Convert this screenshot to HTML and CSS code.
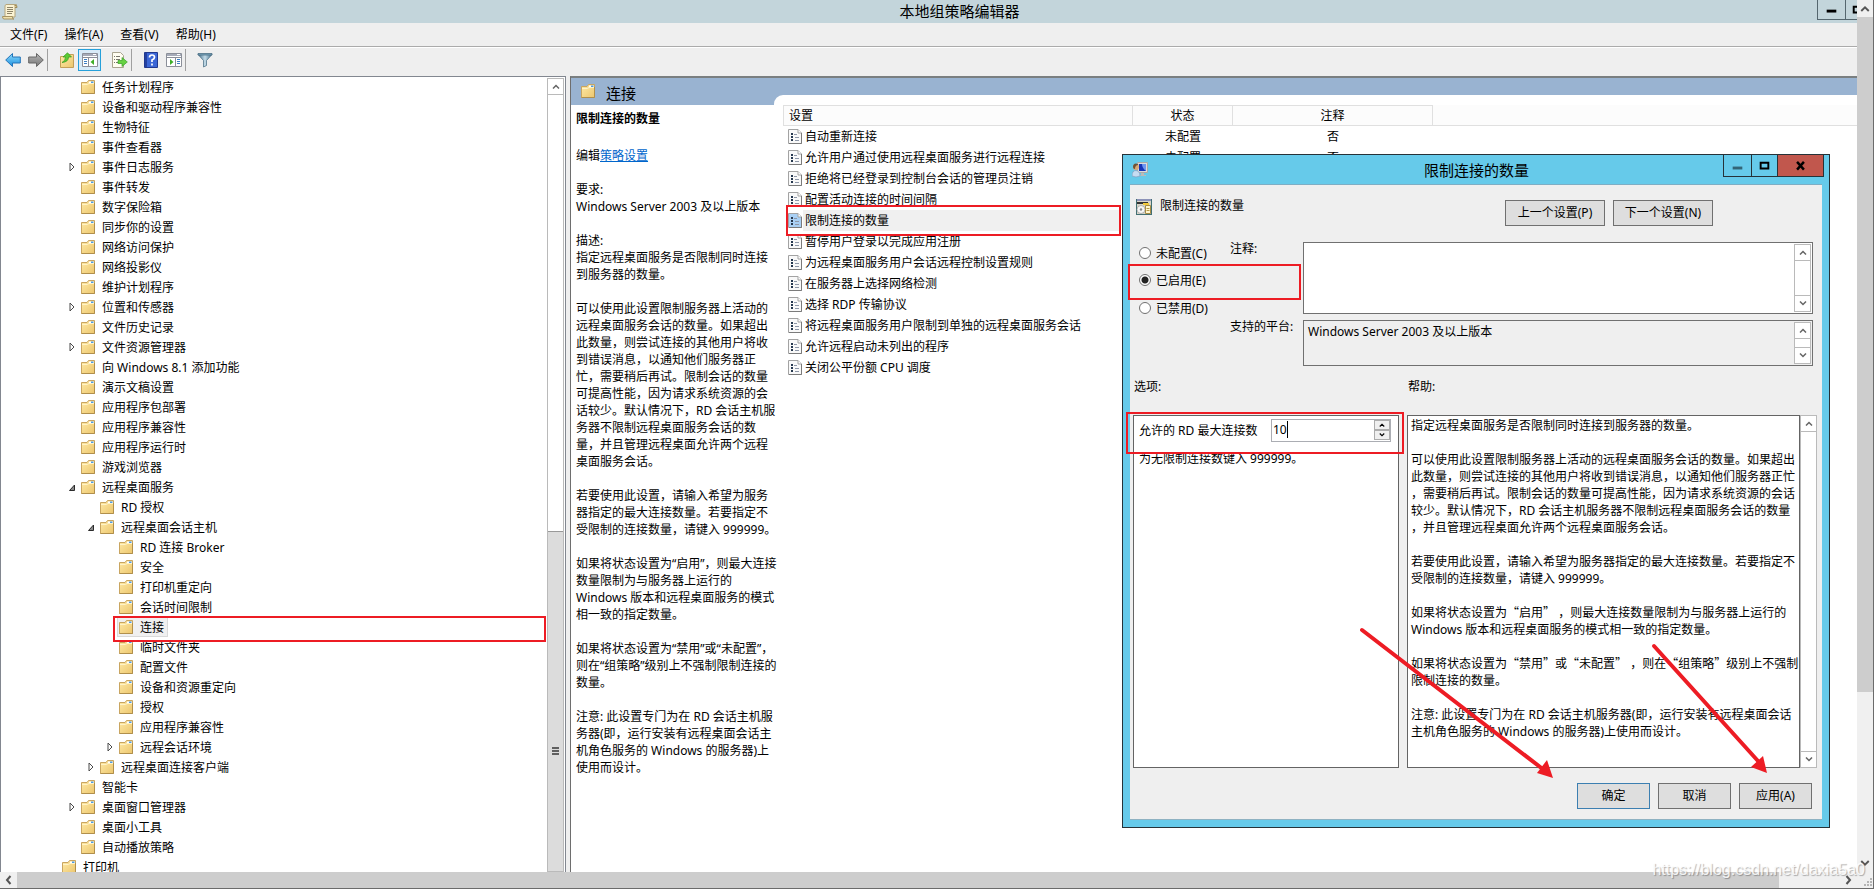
FILE: index.html
```html
<!DOCTYPE html>
<html lang="zh-CN">
	<head>
		<meta charset="utf-8">
		<meta name="viewport" content="width=device-width, initial-scale=1.0">
		<title>本地组策略编辑器</title>
		<link rel="stylesheet" href="styles.css">
	</head>

	<body>
		<!-- 公用图标 -->
		<svg class="sprite" aria-hidden="true">
			<defs>
				<linearGradient id="gfolder" x1="0" y1="0" x2="1" y2="1"><stop offset="0" stop-color="#ffeaa6"/><stop offset="1" stop-color="#ecc66e"/></linearGradient>
				<linearGradient id="gblue" x1="0" y1="0" x2="0" y2="1"><stop offset="0" stop-color="#8fdcfb"/><stop offset="1" stop-color="#1a8fe0"/></linearGradient>
				<linearGradient id="ggray" x1="0" y1="0" x2="0" y2="1"><stop offset="0" stop-color="#b5b5b5"/><stop offset="1" stop-color="#777"/></linearGradient>
				<linearGradient id="gfunnel" x1="0" y1="0" x2="1" y2="0"><stop offset="0" stop-color="#3f6b86"/><stop offset=".5" stop-color="#c3dbe8"/><stop offset="1" stop-color="#41708c"/></linearGradient>
			</defs>
			<symbol id="folder" viewBox="0 0 14 14">
				<path d="M0.5 2.5H6L7.5 0.5H13.5V13.5H0.5Z" fill="url(#gfolder)" stroke="#c9a560"/>
				<path d="M8 1.5H13V3.5H8Z" fill="#fff"/><path d="M10 1.5H12.5V3H10Z" fill="#4d9be0"/>
				<path d="M1 4.5H6.5L8 3.5H13" fill="none" stroke="#fff3c8"/>
				<path d="M0.5 13.5H13.5V3" fill="none" stroke="#b08f4c"/>
			</symbol>
			<symbol id="sheet" viewBox="0 0 14 15">
				<path class="paper" d="M0.5 0.5H10L13.5 4V14.5H0.5Z" stroke="#a3a3a3"/>
				<path d="M10 0.5V4H13.5" fill="#fff" stroke="#a3a3a3"/>
				<path d="M13.5 4V14.5H1" fill="none" stroke="#7b7b7b"/>
				<path d="M3 4H5V6H3ZM3 7H5V9H3ZM3 10H5V12H3Z" fill="#26384f"/>
				<path d="M6 5.5H9M7 8.5H11M7 11.5H11" stroke="#8e97a8" fill="none"/>
			</symbol>
			<symbol id="closed" viewBox="0 0 6 10"><path d="M1 1L5 5L1 9Z" fill="#fff" stroke="#4a4a4a"/></symbol>
			<symbol id="opened" viewBox="0 0 6 7"><path d="M5.500 1V6.500H0.500Z" fill="#8a8a8a" stroke="#2b2b2b"/></symbol>
			<symbol id="up" viewBox="0 0 8 5"><path d="M1 4.500L4 1.500L7 4.500" fill="none" stroke="currentColor" stroke-width="1.500"/></symbol>
			<symbol id="down" viewBox="0 0 8 5"><path d="M1 .5L4 3.500L7 .5" fill="none" stroke="currentColor" stroke-width="1.500"/></symbol>
			<symbol id="panes" viewBox="0 0 16 14">
				<path d="M.5 .5H15.500V13.500H.5Z" fill="#fff" stroke="#8b8f99"/>
				<path d="M1 1H15V3H1Z" fill="#a6abb8"/><path d="M11 1.500H14" stroke="#fff"/>
				<path d="M1 4.500H15" stroke="#8b8f99"/>
			</symbol>
		</svg>

		<div class="viewer">
			<div class="desktop">
				<header class="titlebar">
					<svg class="app-icon" viewBox="0 0 16 16">
						<path d="M4 .5H14.500Q13 1 13 3V13H3V2Q3 1 4 .5Z" fill="#fbf3d2" stroke="#b5a67c"/>
						<path d="M12.500 1.500Q15.500 .5 15 3.500H13" fill="#d9c48a" stroke="#9c8b5c"/>
						<path d="M.5 12.500H10.500Q10 15.500 12 15H2Q.5 15 .5 12.500Z" fill="#f0e2ae" stroke="#a79463"/>
						<path d="M5 3.500H11M5 5.500H11M5 7.500H11M5 9.500H10" stroke="#8d8468"/>
					</svg>
					<h1>本地组策略编辑器</h1>
					<div class="winbtns">
						<button type="button" aria-label="最小化"><svg viewBox="0 0 28 20"><path d="M9 10H19V13H9Z"/></svg></button>
						<button type="button" aria-label="最大化"><svg viewBox="0 0 28 20"><path d="M8 7H18V13H8Z" fill="none" stroke="#000" stroke-width="2"/></svg></button>
					</div>
				</header>
				<nav class="menubar">
					<a href="#">文件(F)</a>
					<a href="#">操作(A)</a>
					<a href="#">查看(V)</a>
					<a href="#">帮助(H)</a>
				</nav>
				<div class="toolbar">
					<button type="button" aria-label="后退"><svg width="16" height="16" viewBox="0 0 16 16"><path d="M.7 8L7.500 1.500V5H15.300V11H7.500V14.500Z" fill="url(#gblue)" stroke="#2574b8"/></svg></button>
					<button type="button" aria-label="前进"><svg width="16" height="16" viewBox="0 0 16 16"><path d="M15.300 8L8.500 1.500V5H.7V11H8.500V14.500Z" fill="url(#ggray)" stroke="#666"/></svg></button>
					<span class="sep"></span>
					<button type="button" aria-label="上一级"><svg width="16" height="16" viewBox="0 0 16 16"><path d="M1.500 4.500H7L8.500 2.500H14.500V15.500H1.500Z" fill="url(#gfolder)" stroke="#c39f58"/><path d="M3 10.500Q6.500 9 6.500 5H4L8.500 .8L12.500 5H9.500Q9.500 10 3 10.500Z" fill="#5ccb34" stroke="#2f9a1e" stroke-width=".7"/></svg></button>
					<button type="button" class="on" aria-label="显示控制台树"><svg width="16" height="14" viewBox="0 0 16 14"><use href="#panes"/><path d="M6.500 5V13" stroke="#8b8f99"/><path d="M2 6.500H5M2 8.500H5M2 10.500H5" stroke="#3b7fc4"/><path d="M12 6V12L8.500 9Z" fill="#3fae29"/></svg></button>
					<button type="button" aria-label="导出列表"><svg width="17" height="16" viewBox="0 0 17 16"><path d="M1.500 .5H9.500L12.500 3.500V15.500H1.500Z" fill="#fffdf0" stroke="#a9a48f"/><path d="M3 4.500H4M3 7.500H4M3 10.500H4M5 4.500H9M5 7.500H9M5 10.500H8" stroke="#77756b"/><path d="M7 8.500H11V5.500L16.300 10L11 14.500V11.500H7Z" fill="#67d243" stroke="#37a026" stroke-width=".7"/></svg></button>
					<span class="sep"></span>
					<button type="button" aria-label="帮助"><svg width="14" height="16" viewBox="0 0 14 16"><path d="M.5 .5H13.500V15.500H.5Z" fill="#3b66d6" stroke="#20388f"/><path d="M1 1H3V15H1Z" fill="#24409f"/><path d="M5.500 5.500Q5.500 3 8 3Q10.500 3 10.500 5.200Q10.500 6.800 8 8V10M8 11.500V13.500" fill="none" stroke="#fff" stroke-width="1.700"/></svg></button>
					<button type="button" aria-label="操作窗格"><svg width="16" height="14" viewBox="0 0 16 14"><use href="#panes"/><path d="M9.500 5V13" stroke="#8b8f99"/><path d="M11 6.500H14M11 8.500H14M11 10.500H14" stroke="#3b7fc4"/><path d="M4 6V12L7.500 9Z" fill="#3fae29"/></svg></button>
					<span class="sep"></span>
					<button type="button" aria-label="筛选器"><svg width="16" height="16" viewBox="0 0 16 16"><path d="M1 2.500L6.500 8.500V15L9.500 13.500V8.500L15 2.500Z" fill="url(#gfunnel)" stroke="#44697f" stroke-width=".7"/><path d="M1 1.500H15V3H1Z" fill="#7fa9c0" stroke="#3e6278" stroke-width=".7"/></svg></button>
				</div>

				<main class="panes">
					<section class="tree-pane">
						<ul class="tree">
							<li class="lv1"><i></i><span><svg><use href="#folder"/></svg>任务计划程序</span></li>
							<li class="lv1"><i></i><span><svg><use href="#folder"/></svg>设备和驱动程序兼容性</span></li>
							<li class="lv1"><i></i><span><svg><use href="#folder"/></svg>生物特征</span></li>
							<li class="lv1"><i></i><span><svg><use href="#folder"/></svg>事件查看器</span></li>
							<li class="lv1"><i><svg class="closed"><use href="#closed"/></svg></i><span><svg><use href="#folder"/></svg>事件日志服务</span></li>
							<li class="lv1"><i></i><span><svg><use href="#folder"/></svg>事件转发</span></li>
							<li class="lv1"><i></i><span><svg><use href="#folder"/></svg>数字保险箱</span></li>
							<li class="lv1"><i></i><span><svg><use href="#folder"/></svg>同步你的设置</span></li>
							<li class="lv1"><i></i><span><svg><use href="#folder"/></svg>网络访问保护</span></li>
							<li class="lv1"><i></i><span><svg><use href="#folder"/></svg>网络投影仪</span></li>
							<li class="lv1"><i></i><span><svg><use href="#folder"/></svg>维护计划程序</span></li>
							<li class="lv1"><i><svg class="closed"><use href="#closed"/></svg></i><span><svg><use href="#folder"/></svg>位置和传感器</span></li>
							<li class="lv1"><i></i><span><svg><use href="#folder"/></svg>文件历史记录</span></li>
							<li class="lv1"><i><svg class="closed"><use href="#closed"/></svg></i><span><svg><use href="#folder"/></svg>文件资源管理器</span></li>
							<li class="lv1"><i></i><span><svg><use href="#folder"/></svg>向 Windows 8.1 添加功能</span></li>
							<li class="lv1"><i></i><span><svg><use href="#folder"/></svg>演示文稿设置</span></li>
							<li class="lv1"><i></i><span><svg><use href="#folder"/></svg>应用程序包部署</span></li>
							<li class="lv1"><i></i><span><svg><use href="#folder"/></svg>应用程序兼容性</span></li>
							<li class="lv1"><i></i><span><svg><use href="#folder"/></svg>应用程序运行时</span></li>
							<li class="lv1"><i></i><span><svg><use href="#folder"/></svg>游戏浏览器</span></li>
							<li class="lv1"><i><svg class="opened"><use href="#opened"/></svg></i><span><svg><use href="#folder"/></svg>远程桌面服务</span></li>
							<li class="lv2"><i></i><span><svg><use href="#folder"/></svg>RD 授权</span></li>
							<li class="lv2"><i><svg class="opened"><use href="#opened"/></svg></i><span><svg><use href="#folder"/></svg>远程桌面会话主机</span></li>
							<li class="lv3"><i></i><span><svg><use href="#folder"/></svg>RD 连接 Broker</span></li>
							<li class="lv3"><i></i><span><svg><use href="#folder"/></svg>安全</span></li>
							<li class="lv3"><i></i><span><svg><use href="#folder"/></svg>打印机重定向</span></li>
							<li class="lv3"><i></i><span><svg><use href="#folder"/></svg>会话时间限制</span></li>
							<li class="lv3 marked"><i></i><span class="cur"><svg><use href="#folder"/></svg>连接</span></li>
							<li class="lv3"><i></i><span><svg><use href="#folder"/></svg>临时文件夹</span></li>
							<li class="lv3"><i></i><span><svg><use href="#folder"/></svg>配置文件</span></li>
							<li class="lv3"><i></i><span><svg><use href="#folder"/></svg>设备和资源重定向</span></li>
							<li class="lv3"><i></i><span><svg><use href="#folder"/></svg>授权</span></li>
							<li class="lv3"><i></i><span><svg><use href="#folder"/></svg>应用程序兼容性</span></li>
							<li class="lv3"><i><svg class="closed"><use href="#closed"/></svg></i><span><svg><use href="#folder"/></svg>远程会话环境</span></li>
							<li class="lv2"><i><svg class="closed"><use href="#closed"/></svg></i><span><svg><use href="#folder"/></svg>远程桌面连接客户端</span></li>
							<li class="lv1"><i></i><span><svg><use href="#folder"/></svg>智能卡</span></li>
							<li class="lv1"><i><svg class="closed"><use href="#closed"/></svg></i><span><svg><use href="#folder"/></svg>桌面窗口管理器</span></li>
							<li class="lv1"><i></i><span><svg><use href="#folder"/></svg>桌面小工具</span></li>
							<li class="lv1"><i></i><span><svg><use href="#folder"/></svg>自动播放策略</span></li>
							<li class="lv0"><i></i><span><svg><use href="#folder"/></svg>打印机</span></li>
						</ul>
						<div class="sbar">
							<button type="button" aria-label="向上滚动"><svg><use href="#up"/></svg></button>
							<div class="thumb"><b></b><b></b><b></b></div>
						</div>
					</section>

					<section class="detail-pane">
						<div class="caption">
							<h2><svg><use href="#folder"/></svg>连接</h2>
							<div class="caption-end"></div>
						</div>
						<div class="detail">
							<div class="extended">
								<h3>限制连接的数量</h3>
								<p class="edit">编辑<a href="#">策略设置</a></p>
								<p>要求:<br>Windows Server 2003 及以上版本</p>
								<p>描述:<br>指定远程桌面服务是否限制同时连接<br>到服务器的数量。</p>
								<p>可以使用此设置限制服务器上活动的<br>远程桌面服务会话的数量。如果超出<br>此数量，则尝试连接的其他用户将收<br>到错误消息，以通知他们服务器正<br>忙，需要稍后再试。限制会话的数量<br>可提高性能，因为请求系统资源的会<br>话较少。默认情况下，RD 会话主机服<br>务器不限制远程桌面服务会话的数<br>量，并且管理远程桌面允许两个远程<br>桌面服务会话。</p>
								<p>若要使用此设置，请输入希望为服务<br>器指定的最大连接数量。若要指定不<br>受限制的连接数量，请键入 999999。</p>
								<p>如果将状态设置为“启用”，则最大连接<br>数量限制为与服务器上运行的<br>Windows 版本和远程桌面服务的模式<br>相一致的指定数量。</p>
								<p>如果将状态设置为“禁用”或“未配置”，<br>则在“组策略”级别上不强制限制连接的<br>数量。</p>
								<p>注意: 此设置专门为在 RD 会话主机服<br>务器(即，运行安装有远程桌面会话主<br>机角色服务的 Windows 的服务器)上<br>使用而设计。</p>
							</div>
							<table class="list">
								<thead>
									<tr><th class="c-name">设置</th><th class="c-state">状态</th><th class="c-note">注释</th><th class="c-rest"></th></tr>
								</thead>
								<tbody>
									<tr><td><div><svg><use href="#sheet"/></svg><span>自动重新连接</span></div></td><td>未配置</td><td>否</td><td></td></tr>
									<tr><td><div><svg><use href="#sheet"/></svg><span>允许用户通过使用远程桌面服务进行远程连接</span></div></td><td>未配置</td><td>否</td><td></td></tr>
									<tr><td><div><svg><use href="#sheet"/></svg><span>拒绝将已经登录到控制台会话的管理员注销</span></div></td><td>未配置</td><td>否</td><td></td></tr>
									<tr><td><div><svg><use href="#sheet"/></svg><span>配置活动连接的时间间隔</span></div></td><td>未配置</td><td>否</td><td></td></tr>
									<tr class="cur"><td><div class="marked"><svg><use href="#sheet"/></svg><span>限制连接的数量</span></div></td><td>未配置</td><td>否</td><td></td></tr>
									<tr><td><div><svg><use href="#sheet"/></svg><span>暂停用户登录以完成应用注册</span></div></td><td>未配置</td><td>否</td><td></td></tr>
									<tr><td><div><svg><use href="#sheet"/></svg><span>为远程桌面服务用户会话远程控制设置规则</span></div></td><td>未配置</td><td>否</td><td></td></tr>
									<tr><td><div><svg><use href="#sheet"/></svg><span>在服务器上选择网络检测</span></div></td><td>未配置</td><td>否</td><td></td></tr>
									<tr><td><div><svg><use href="#sheet"/></svg><span>选择 RDP 传输协议</span></div></td><td>未配置</td><td>否</td><td></td></tr>
									<tr><td><div><svg><use href="#sheet"/></svg><span>将远程桌面服务用户限制到单独的远程桌面服务会话</span></div></td><td>未配置</td><td>否</td><td></td></tr>
									<tr><td><div><svg><use href="#sheet"/></svg><span>允许远程启动未列出的程序</span></div></td><td>未配置</td><td>否</td><td></td></tr>
									<tr><td><div><svg><use href="#sheet"/></svg><span>关闭公平份额 CPU 调度</span></div></td><td>未配置</td><td>否</td><td></td></tr>
								</tbody>
							</table>
						</div>
					</section>
				</main>

				<!-- 策略设置对话框 -->
				<form class="dialog">
					<div class="dlg-title">
						<svg class="dlg-icon" viewBox="0 0 16 16">
							<path d="M5.500 .5H15.500V10.500H5.500Z" fill="#ddd" stroke="#aaa"/><path d="M7 2H14V9H7Z" fill="#1836b8"/><path d="M10 2H14V9Q10 6 10 2Z" fill="#6f97f0"/>
							<path d="M9 11H12V13H14V14H7V13H9Z" fill="#bbb"/>
							<circle cx="4" cy="5" r="3" fill="#d9a878"/><path d="M1 5Q1 1.500 4 1.500Q6 1.500 6.500 3Q3 3 3 7Q1 7 1 5Z" fill="#6e5136"/>
							<path d="M0 14Q0 8.500 4 8.500Q8 9 8 14Q4 16 0 14Z" fill="#c6dcf2" stroke="#7f9fc0" stroke-width=".7"/>
						</svg>
						<h2>限制连接的数量</h2>
						<div class="dlg-btns">
							<button type="button" aria-label="最小化"><svg viewBox="0 0 28 22"><path d="M9 12H19V15H9Z" fill="#336577"/></svg></button>
							<button type="button" aria-label="最大化"><svg viewBox="0 0 26 22"><path d="M9 8H17V14H9Z" fill="none" stroke="#000" stroke-width="2"/></svg></button>
							<button type="button" class="close" aria-label="关闭"><svg viewBox="0 0 46 22"><path d="M19.500 7L26.500 15M26.500 7L19.500 15" fill="none" stroke="#000" stroke-width="2.500"/></svg></button>
						</div>
					</div>
					<div class="dlg-body">
						<div class="dlg-head">
							<svg class="set-icon" viewBox="0 0 16 16">
								<path d="M0 0H16V16H0Z" fill="#426f73"/><path d="M1 2H15V15H1Z" fill="#d8d5c8"/><path d="M1 0H15V2H1Z" fill="#8d93b8"/><path d="M1 3H12V5H1Z" fill="#333"/><path d="M7 4H13V6H7Z" fill="#f3c93a"/>
								<circle cx="5" cy="10.500" r="4" fill="#f6f6f6" stroke="#999" stroke-width=".7"/><circle cx="5" cy="10.500" r="1.200" fill="#888"/>
								<path d="M9.500 6.500H14.500V14.500H9.500Z" fill="#fff6cf" stroke="#a68b45"/><path d="M10.500 9.500H13.500M10.500 11.500H13.500" stroke="#b79a4b"/>
							</svg>
							<strong>限制连接的数量</strong>
							<div class="nav-btns">
								<button type="button" class="btn">上一个设置(P)</button>
								<button type="button" class="btn">下一个设置(N)</button>
							</div>
						</div>

						<div class="dlg-state">
							<div class="radios">
								<label><input type="radio" name="state">未配置(C)</label>
								<label class="marked"><input type="radio" name="state" checked>已启用(E)</label>
								<label><input type="radio" name="state">已禁用(D)</label>
							</div>
							<div class="fields">
								<label for="note">注释:</label>
								<div class="box note">
									<textarea id="note"></textarea>
									<div class="sbar thin"><button type="button" aria-label="向上滚动"><svg><use href="#up"/></svg></button><button type="button" aria-label="向下滚动"><svg><use href="#down"/></svg></button></div>
								</div>
								<label for="platform">支持的平台:</label>
								<div class="box platform">
									<textarea id="platform" readonly>Windows Server 2003 及以上版本</textarea>
									<div class="sbar thin"><button type="button" aria-label="向上滚动"><svg><use href="#up"/></svg></button><button type="button" aria-label="向下滚动"><svg><use href="#down"/></svg></button></div>
								</div>
							</div>
						</div>

						<div class="dlg-cols">
							<h3>选项:</h3>
							<h3>帮助:</h3>
							<div class="options">
								<div class="opt-row marked">
									<label for="maxconn">允许的 RD 最大连接数</label>
									<div class="spin">
										<input type="text" id="maxconn" value="10">
										<i class="caret"></i>
										<div class="spin-btns">
											<button type="button" aria-label="增加"><svg><use href="#up"/></svg></button>
											<button type="button" aria-label="减少"><svg><use href="#down"/></svg></button>
										</div>
									</div>
								</div>
								<p>为无限制连接数键入 999999。</p>
							</div>
							<div class="help">
								<div class="help-text">
									<p>指定远程桌面服务是否限制同时连接到服务器的数量。</p>
									<p>可以使用此设置限制服务器上活动的远程桌面服务会话的数量。如果超出<br>此数量，则尝试连接的其他用户将收到错误消息，以通知他们服务器正忙<br>，需要稍后再试。限制会话的数量可提高性能，因为请求系统资源的会话<br>较少。默认情况下，RD 会话主机服务器不限制远程桌面服务会话的数量<br>，并且管理远程桌面允许两个远程桌面服务会话。</p>
									<p>若要使用此设置，请输入希望为服务器指定的最大连接数量。若要指定不<br>受限制的连接数量，请键入 999999。</p>
									<p>如果将状态设置为<em>“</em>启用<em>”</em> ，则最大连接数量限制为与服务器上运行的<br>Windows 版本和远程桌面服务的模式相一致的指定数量。</p>
									<p>如果将状态设置为<em>“</em>禁用<em>”</em>或<em>“</em>未配置<em>”</em> ，则在<em>“</em>组策略<em>”</em>级别上不强制<br>限制连接的数量。</p>
									<p>注意: 此设置专门为在 RD 会话主机服务器(即，运行安装有远程桌面会话<br>主机角色服务的 Windows 的服务器)上使用而设计。</p>
								</div>
								<div class="sbar thin"><button type="button" aria-label="向上滚动"><svg><use href="#up"/></svg></button><button type="button" aria-label="向下滚动"><svg><use href="#down"/></svg></button></div>
							</div>
						</div>

						<div class="dlg-foot">
							<button type="button" class="btn primary">确定</button>
							<button type="button" class="btn">取消</button>
							<button type="button" class="btn">应用(A)</button>
						</div>
					</div>
					<svg class="arrows" viewBox="0 0 708 673">
						<g stroke="#ed1c24" stroke-width="4" stroke-linecap="round" fill="#ed1c24">
							<path d="M240 476L422 616"/><path d="M532 492L636 607"/>
							<path d="M431 624L415 619L425 606Z" stroke="none"/>
							<path d="M645 619L629 613L641 602Z" stroke="none"/>
						</g>
					</svg>
				</form>
			</div>

			<div class="vscroll">
				<button type="button" aria-label="向上滚动"><svg width="10" height="7"><use href="#up"/></svg></button>
				<div class="vtrack"><div class="vthumb"></div></div>
				<button type="button" aria-label="向下滚动"><svg width="10" height="7"><use href="#down"/></svg></button>
			</div>
			<div class="hscroll">
				<button type="button" aria-label="向左滚动"><svg width="7" height="10" viewBox="0 0 7 10"><path d="M5.500 1L2 5L5.500 9" fill="none" stroke="#555" stroke-width="2"/></svg></button>
				<div class="htrack"><div class="hthumb"></div></div>
				<button type="button" aria-label="向右滚动"><svg width="7" height="10" viewBox="0 0 7 10"><path d="M1.500 1L5 5L1.500 9" fill="none" stroke="#555" stroke-width="2"/></svg></button>
			</div>
			<div class="grip"><svg width="10" height="10" viewBox="0 0 10 10"><path d="M7 0H9V2H7ZM7 3H9V5H7ZM7 6H9V8H7ZM4 3H6V5H4ZM4 6H6V8H4ZM1 6H3V8H1Z" fill="#b5b5b5"/></svg></div>
			<div class="watermark">https://blog.csdn.net/daxia5a0</div>
		</div>
	</body>
</html>
```
FILE: styles.css
```css
* { box-sizing: border-box; }
body { margin: 0; font: 12px/17px "Noto Sans", "Noto Sans CJK SC", sans-serif; color: #000; background: #fff; }
h1, h2, h3, p, ul { margin: 0; padding: 0; font-weight: normal; }
ul { list-style: none; }
button { margin: 0; padding: 0; border: 0; background: none; font: inherit; color: inherit; }
svg { display: block; flex: none; }
.sprite { position: absolute; width: 0; height: 0; }
.paper { fill: var(--paper, #f9f9f9); }

.viewer { position: relative; display: grid; grid-template-columns: minmax(0,1fr) 16px; grid-template-rows: minmax(0,1fr) 16px; height: 100vh; border-right: 1px solid #6b6b6b; border-bottom: 1px solid #6b6b6b; overflow: hidden; }
.desktop { position: relative; display: flex; flex-direction: column; background: #efefef; min-height: 0; overflow: hidden; }

/* 标题栏 */
.titlebar { display: flex; height: 23px; background: #c3d5db; }
.app-icon { width: 16px; height: 16px; margin: 4px 0 0 2px; }
.titlebar h1 { flex: 1; padding-left: 84px; text-align: center; font-size: 15px; line-height: 22px; }
.winbtns { display: flex; width: 40px; height: 20px; overflow: hidden; border-left: 1px solid #55666e; border-bottom: 1px solid #55666e; }
.winbtns button { flex: none; width: 28px; border-right: 1px solid #55666e; }

.menubar { display: flex; gap: 17px; height: 24px; padding-left: 10px; border-bottom: 1px solid #ababab; line-height: 24px; }
.menubar a { color: #000; text-decoration: none; }
.toolbar { display: flex; align-items: center; height: 29px; padding: 0 0 5px 1px; border-top: 1px solid #fff; }
.toolbar button { display: flex; align-items: center; justify-content: center; width: 23px; height: 22px; }
.toolbar button.on { border: 1px solid #26a0da; background: #d8ebf8; margin-right: 7px; }
.toolbar .sep { width: 1px; height: 22px; margin: 0 7px 0 0; background: #a0a0a0; }

/* 左侧树 */
.panes { flex: 1; display: flex; min-height: 0; gap: 4px; }
.tree-pane { display: flex; flex: 0 0 566px; min-height: 0; padding-right: 1px; border: 1px solid #828790; border-bottom: 0; background: #fff; overflow: hidden; }
.tree { flex: 1; }
.tree li { position: relative; display: flex; align-items: center; height: 20px; }
.tree i { display: flex; align-items: center; width: 10px; height: 20px; }
.tree span { display: flex; align-items: center; height: 20px; padding: 0 3px 0 1px; border: 1px solid transparent; }
.tree span svg { width: 14px; height: 14px; margin-right: 7px; }
.tree span.cur { background: #f0f0f0; border-color: #d9d9d9; }
.tree .closed { width: 6px; height: 10px; }
.tree .opened { width: 6px; height: 7px; }
.lv0 { padding-left: 49px; }
.lv1 { padding-left: 68px; }
.lv2 { padding-left: 87px; }
.lv3 { padding-left: 106px; }
/* 红色标注框 */
.marked { position: relative; }
.marked::after { content: ""; position: absolute; border: 2px solid #ed1c24; pointer-events: none; z-index: 2; }
.tree .marked::after { left: 112px; right: 1px; top: -1px; bottom: -5px; }

.sbar { display: flex; flex-direction: column; flex: none; width: 17px; border: 1px solid #bababa; background: #fff; color: #666; }
.tree-pane > .sbar { margin-top: 1px; }
.sbar button { display: flex; align-items: center; justify-content: center; flex: none; height: 16px; border-bottom: 1px solid #bababa; }
.sbar button svg { width: 8px; height: 5px; }
.sbar .thumb { display: flex; flex-direction: column; align-items: center; justify-content: center; gap: 1px; height: 340px; margin-top: auto; padding-top: 98px; border-top: 1px solid #999; background: #dcdcdc; }
.sbar .thumb b { width: 7px; height: 2px; background: #5f5f5f; }
.sbar.thin button:last-child { margin-top: auto; border-top: 1px solid #bababa; border-bottom: 0; }

/* 右侧明细 */
.detail-pane { flex: 1; display: flex; flex-direction: column; min-width: 0; border-left: 1px solid #6e6e6e; border-top: 2px solid #7a7f80; background: #fff; }
.caption { display: flex; height: 27px; background: #99b3d1; }
.caption h2 { display: flex; width: 203px; padding-left: 10px; font-size: 15px; line-height: 30px; }
.caption h2 svg { width: 14px; height: 14px; margin: 6px 11px 0 0; }
.caption-end { flex: 1; height: 10px; margin-top: 17px; background: #fff; border-top-left-radius: 9px; }
.detail { flex: 1; display: flex; min-height: 0; }
.extended { flex: none; width: 212px; padding: 5px 0 0 5px; white-space: nowrap; }
.extended h3 { margin-bottom: 20px; font-size: 12px; font-weight: bold; }
.extended p { margin-bottom: 17px; }
.extended a { color: #0066cc; }

.list { flex: 1; align-self: flex-start; table-layout: fixed; width: 100%; border-collapse: separate; border-spacing: 0; }
.list th { height: 21px; padding: 0; border: 1px solid #e0e0e0; border-left: 0; background: #fcfcfc; font-weight: normal; }
.list .c-name { width: 350px; padding-left: 5px; border-left: 1px solid #e0e0e0; text-align: left; }
.list .c-state { width: 100px; }
.list .c-note { width: 200px; }
.list .c-rest { border-top: 0; border-right: 0; }
.list td { height: 21px; padding: 0; text-align: center; }
.list td div { display: flex; align-items: center; height: 21px; padding: 0 12px 0 5px; text-align: left; white-space: nowrap; }
.list td svg { width: 14px; height: 15px; margin-right: 1px; }
.list td span { flex: 1; padding-left: 2px; line-height: 21px; }
.list .cur span { background: #f0f0f0; }
.list .cur { --paper: #a9d0f5; }
.list .marked::after { left: 3px; right: 12px; top: -5px; bottom: -5px; }

/* 对话框 */
.dialog { position: absolute; left: 1122px; top: 154px; display: flex; flex-direction: column; width: 708px; padding: 0 7px 7px; border: 1px solid #263238; background: #66caea; }
.dlg-title { display: flex; height: 29px; }
.dlg-icon { width: 16px; height: 16px; margin: 7px 0 0 2px; }
.dlg-title h2 { flex: 1; padding-left: 82px; text-align: center; font-size: 15px; line-height: 30px; }
.dlg-btns { display: flex; height: 22px; margin-right: -2px; border: 1px solid #263238; border-top: 0; }
.dlg-btns button { width: 28px; border-right: 1px solid #263238; }
.dlg-btns button + button { width: 26px; }
.dlg-btns button.close { width: 45px; border: 0; background: #c1574d; }
.dlg-body { border-top: 1px solid #7eaec4; border-bottom: 1px solid #8fb2c2; background: #efefef; }
.dlg-head { display: flex; height: 57px; padding: 14px 109px 0 6px; }
.set-icon { width: 16px; height: 16px; margin-right: 8px; }
.dlg-head strong { flex: 1; font-weight: normal; line-height: 13px; }
.nav-btns { display: flex; gap: 8px; padding-top: 1px; }
.btn { width: 73px; height: 26px; border: 1px solid #707070; background: #dedede; line-height: 22px; }
.nav-btns .btn { width: 100px; }
.btn.primary { border-color: #3c7fb1; }

.dlg-state { display: flex; height: 124px; padding-right: 9px; }
.radios { width: 100px; padding-left: 9px; }
.radios label { display: flex; align-items: center; height: 28px; gap: 5px; margin-right: -71px; padding-right: 71px; }
.radios label:first-child { height: 22px; margin-bottom: 2px; }
.radios .marked::after { left: -11px; right: 0; top: -2px; bottom: -6px; }
.radios input { appearance: none; width: 12px; height: 12px; margin: 0; border: 1px solid #707070; border-radius: 50%; background: #fff; }
.radios input:checked { background: radial-gradient(circle, #222 0 3px, #fff 4px); }
.fields { flex: 1; display: grid; grid-template-columns: 73px 1fr; grid-template-rows: 72px 46px; row-gap: 6px; line-height: 13px; }
.box { display: flex; padding: 1px; border: 1px solid #707070; background: #fff; }
.box textarea { flex: 1; padding: 1px 3px; border: 0; outline: 0; resize: none; background: none; font: inherit; line-height: 17px; color: inherit; overflow: hidden; }
.platform { background: #efefef; }

.dlg-cols { display: grid; grid-template-columns: 266px 410px; column-gap: 8px; grid-template-rows: 49px 353px; padding-left: 3px; }
.dlg-cols h3 { padding: 12px 0 0 1px; font-size: 12px; }
.options { border: 1px solid #646464; background: #fff; }
.opt-row { display: flex; align-items: center; justify-content: space-between; height: 30px; padding: 0 7px 2px 5px; }
.opt-row.marked::after { left: -8px; right: -6px; top: -4px; bottom: -8px; }
.options p { padding: 4px 5px; }
.spin { display: flex; width: 120px; height: 23px; padding: 0 0 1px; border: 1px solid #abadb3; background: #fff; }
.spin input { flex: none; width: 15px; padding: 0 0 0 1px; border: 0; outline: 0; background: none; font: inherit; }
.caret { width: 1px; height: 17px; margin-top: 1px; background: #000; }
.spin-btns { display: flex; flex-direction: column; width: 16px; margin-left: auto; }
.spin-btns button { flex: 1; display: flex; align-items: center; justify-content: center; border: 1px solid #acacac; background: #efefef; }
.spin-btns svg { width: 6px; height: 4px; }
.help { display: flex; border-left: 1px solid #646464; }
.help-text { flex: 1; padding: 1px 0 0 3px; border: 1px solid #646464; border-left: 0; background: #fff; white-space: nowrap; }
.help-text p { margin-bottom: 17px; }
.help-text em { font-family: "Noto Sans CJK SC", sans-serif; font-style: normal; line-height: 0; }
.dlg-foot { display: flex; justify-content: flex-end; gap: 8px; padding: 15px 10px 10px; }
.arrows { position: absolute; left: -1px; top: -1px; width: 708px; height: 673px; pointer-events: none; }

/* 外层滚动条 */
.vscroll { display: flex; flex-direction: column; align-items: center; background: #f0f0f0; color: #555; }
.vscroll button { display: flex; align-items: center; justify-content: center; width: 16px; height: 17px; }
.vtrack { flex: 1; align-self: stretch; }
.vthumb { height: calc(100% - 163px); background: #cdcdcd; }
.hscroll { display: flex; align-items: center; background: #f0f0f0; }
.hscroll button { display: flex; align-items: center; justify-content: center; width: 17px; height: 16px; }
.htrack { flex: 1; align-self: stretch; }
.hthumb { width: calc(100% - 61px); height: 100%; background: #cdcdcd; }
.grip { display: flex; align-items: flex-end; justify-content: flex-end; background: #f0f0f0; }
.watermark { position: absolute; right: 8px; bottom: 8px; font: 16px/20px "Liberation Sans", sans-serif; color: rgba(255,255,255,.85); text-shadow: 1px 1px 1px rgba(0,0,0,.3); }
```
